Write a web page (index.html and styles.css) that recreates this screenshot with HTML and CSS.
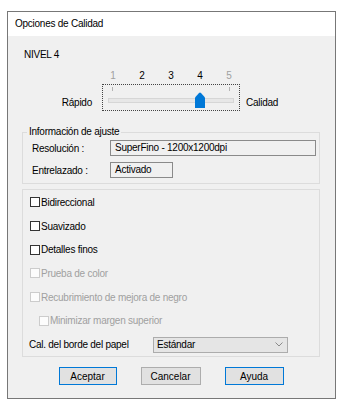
FILE: index.html
```html
<!DOCTYPE html>
<html lang="es">
<head>
    <meta charset="UTF-8">
    <meta name="viewport" content="width=device-width, initial-scale=1.0">
    <title>Opciones de Calidad</title>
    <link rel="stylesheet" href="styles.css">
</head>
<body>
    <div class="window">
        <div class="titlebar">Opciones de Calidad</div>

        <div class="content">
            <div class="level">NIVEL 4</div>

            <div class="slider-row">
                <span class="slider-label left">Rápido</span>
                <div class="slider">
                    <div class="scale">
                        <span class="off">1</span><span>2</span><span>3</span><span>4</span><span class="off">5</span>
                    </div>
                    <div class="slider-box">
                        <div class="ticks"><i></i><i></i></div>
                        <div class="track">
                            <svg class="thumb" width="10" height="16" viewBox="0 0 10 16">
                                <path d="M0 5.5 L4 1 Q5 0 6 1 L10 5.5 V16 H0 Z" fill="#0078d7"/>
                            </svg>
                        </div>
                    </div>
                </div>
                <span class="slider-label right">Calidad</span>
            </div>

            <fieldset class="group info">
                <legend>Información de ajuste</legend>
                <div class="field-row">
                    <span class="field-label">Resolución :</span>
                    <span class="field wide">SuperFino - 1200x1200dpi</span>
                </div>
                <div class="field-row">
                    <span class="field-label">Entrelazado :</span>
                    <span class="field short">Activado</span>
                </div>
            </fieldset>

            <div class="group options">
                <label class="check r24"><span class="box"></span>Bidireccional</label>
                <label class="check r24"><span class="box"></span>Suavizado</label>
                <label class="check r23"><span class="box"></span>Detalles finos</label>
                <label class="check r24 disabled"><span class="box"></span>Prueba de color</label>
                <label class="check r24 disabled"><span class="box"></span>Recubrimiento de mejora de negro</label>
                <label class="check r23 disabled sub"><span class="box"></span>Minimizar margen superior</label>
                <div class="select-row">
                    <span class="select-label">Cal. del borde del papel</span>
                    <div class="select">
                        <span>Estándar</span>
                        <svg width="8" height="5" viewBox="0 0 8 5">
                            <polyline points="0.5,0.5 4,4 7.5,0.5" fill="none" stroke="#8a8a8a" stroke-width="1"/>
                        </svg>
                    </div>
                </div>
            </div>

            <div class="buttons">
                <button class="btn default w58">Aceptar</button>
                <button class="btn w60">Cancelar</button>
                <button class="btn default w59">Ayuda</button>
            </div>
        </div>
    </div>
</body>
</html>
```

FILE: styles.css
```css
:root {
    --face: #f0f0f0;
    --text: #000;
    --muted: #a0a0a0;
    --line: #dcdcdc;
    --blue: #0078d7;
}
* {
    box-sizing: border-box;
}
body {
    margin: 0;
    background: #fff;
    font-family: 'Liberation Sans', Arial, sans-serif;
    font-size: 10px;
    letter-spacing: -0.25px;
    color: var(--text);
}
.window {
    width: 329px;
    margin: 11px 0 0 7px;
    border: 1px solid #777;
    background: var(--face);
}
.titlebar {
    height: 24px;
    line-height: 24px;
    padding-left: 7px;
    background: #fff;
}
.content {
    padding: 13px 15px 13px 14px;
}
.level {
    line-height: 12px;
    padding-left: 2px;
}

/* slider */
.slider-row {
    display: flex;
    align-items: flex-end;
    margin-top: 9px;
}
.slider-label {
    line-height: 12px;
    margin-bottom: 2px;
}
.slider-label.left {
    width: 70px;
    margin-right: 10px;
    text-align: right;
}
.slider-label.right {
    margin-left: 6px;
}
.slider {
    width: 138px;
}
.scale {
    display: flex;
    justify-content: space-between;
    padding: 0 6px;
    line-height: 12px;
    margin-bottom: 2px;
}
.scale span {
    width: 10px;
    text-align: center;
}
.scale .off {
    color: var(--muted);
}
.slider-box {
    height: 27px;
    border: 1px dotted #444;
    padding: 0 5px;
}
.ticks {
    display: flex;
    justify-content: space-between;
    height: 4px;
    margin-top: 2px;
    padding: 0 4px;
}
.ticks i {
    width: 1px;
    background: #b4b4b4;
}
.track {
    position: relative;
    height: 5px;
    margin-top: 7px;
    background: #e7e7e7;
    border: 1px solid #d6d6d6;
}
.thumb {
    position: absolute;
    left: 86px;
    top: -7px;
}

/* group boxes */
.group {
    border: 1px solid var(--line);
    margin: 0;
}
.info {
    margin-top: 15px;
    padding: 2px 0 5px 9px;
}
.info legend {
    margin-left: -5px;
    padding: 0 2px;
    line-height: 12px;
}
.field-row {
    display: flex;
    align-items: center;
    height: 16px;
}
.field-row + .field-row {
    margin-top: 6px;
}
.field-label {
    width: 78px;
}
.field {
    height: 16px;
    line-height: 14px;
    padding-left: 4px;
    border: 1px solid #8a8a8a;
    background: var(--face);
}
.field.wide {
    width: 206px;
}
.field.short {
    width: 63px;
}

.options {
    margin-top: 5px;
    padding: 0 0 0 7px;
}
.check {
    display: flex;
    align-items: center;
    gap: 1px;
}
.r24 {
    height: 24px;
}
.r23 {
    height: 23px;
}
.check .box {
    width: 10px;
    height: 10px;
    border: 1px solid #333;
    background: #fff;
}
.check.disabled {
    color: var(--muted);
}
.check.disabled .box {
    border-color: #cccccc;
    background: #fcfcfc;
}
.check.sub {
    padding-left: 9px;
}
.select-row {
    display: flex;
    align-items: center;
    height: 24px;
    margin-left: -1px;
}
.select-label {
    width: 124px;
}
.select {
    display: flex;
    align-items: center;
    justify-content: space-between;
    width: 135px;
    height: 16px;
    padding: 0 4px 0 3px;
    margin-top: 1px;
    border: 1px solid #acacac;
    background: #e5e5e5;
}

/* buttons */
.buttons {
    display: flex;
    justify-content: center;
    gap: 24px;
    margin-top: 10px;
}
.btn {
    height: 18px;
    padding: 0;
    font: inherit;
    color: var(--text);
    background: #e1e1e1;
    border: 1px solid #adadad;
}
.btn.default {
    border-color: var(--blue);
}
.w58 { width: 58px; }
.w59 { width: 59px; }
.w60 { width: 60px; }
```
